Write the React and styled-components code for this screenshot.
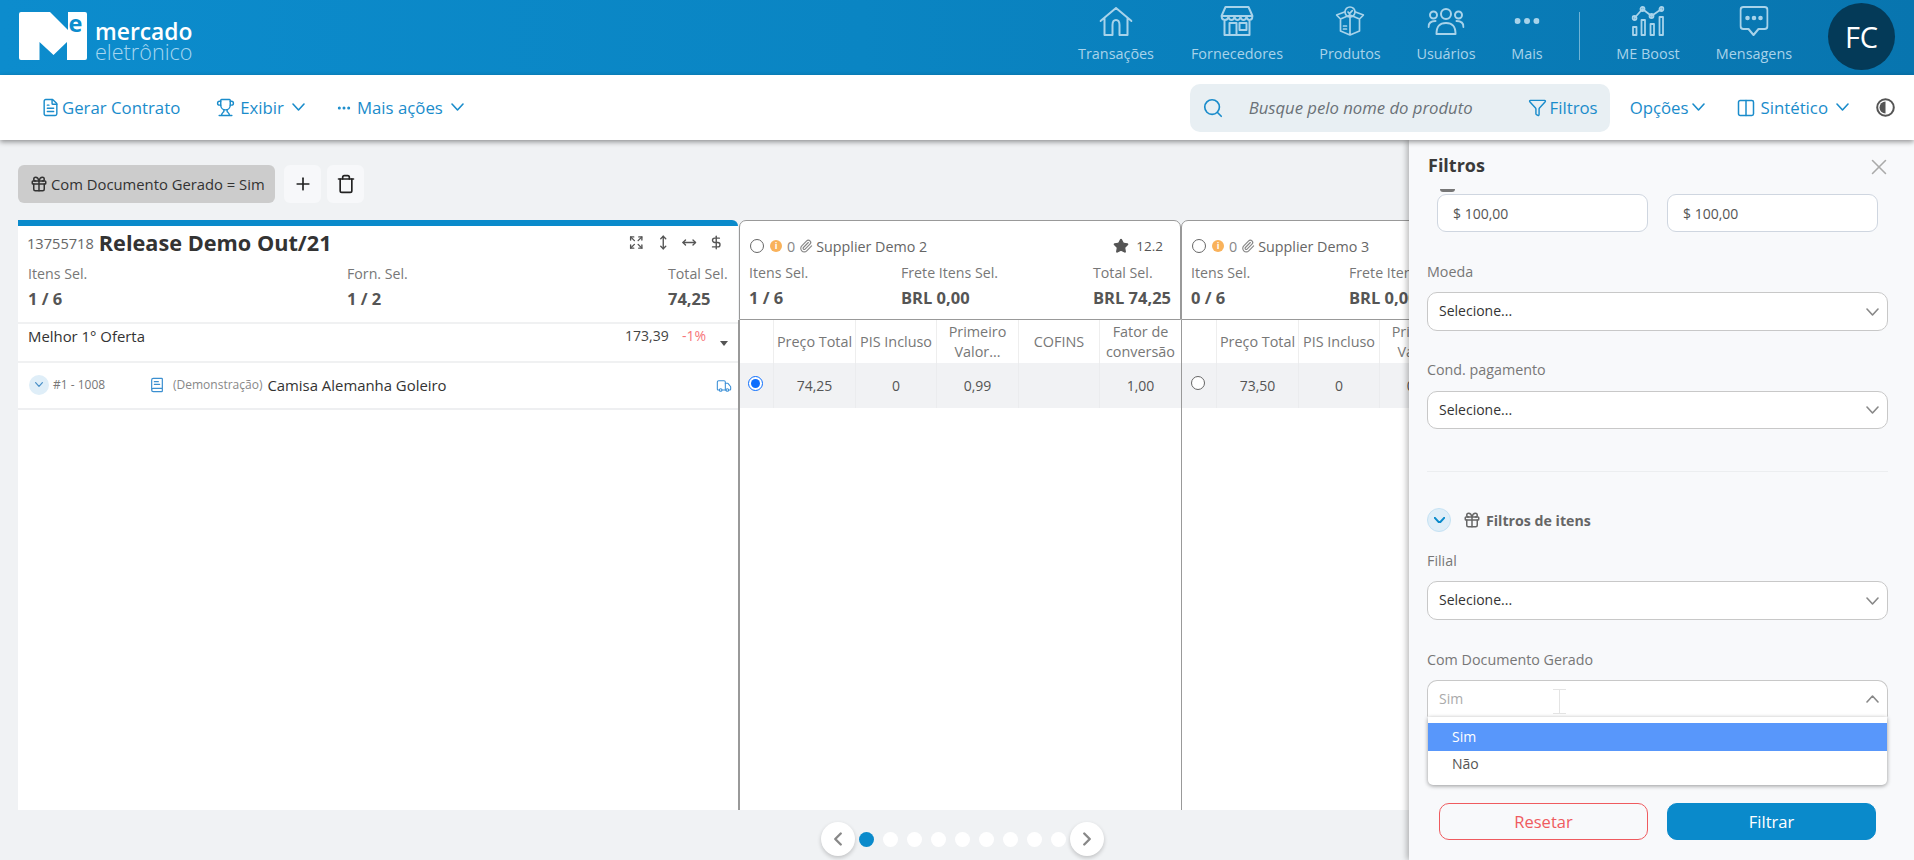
import React from 'react';
import styled, { createGlobalStyle } from 'styled-components';
import {
  FileText, Trophy, Ellipsis, Search, Filter, Columns2, Plus, Trash,
  Star, Paperclip, Gift, BookText, Truck, Expand, MoveVertical, MoveHorizontal, DollarSign, ChevronLeft, ChevronRight, X,
} from 'lucide-react';

const Global = createGlobalStyle`
  html, body { margin: 0; padding: 0; height: 860px; overflow: hidden; background: #f0f2f4; }
  body, button, input { font-family: "Open Sans", "Liberation Sans", sans-serif; }
  * { box-sizing: border-box; }
`;

const Page = styled.div`position: relative; width: 1914px; height: 860px; overflow: hidden; background: #f0f2f4;`;

const Header = styled.header`
  height: 75px; display: flex; align-items: flex-start; padding-right: 19px;
  background: linear-gradient(90deg, #0c8ccd 0%, #0a85c3 45%, #0875af 100%);
`;
const Logo = styled.div`position: relative; margin: 12px 0 0 19px; width: 176px; height: 48px;`;
const LogoE = styled.span`position: absolute; left: 49.500px; top: -7px; font-size: 23.500px; line-height: 36px; font-weight: 700; color: #0c8ccd;`;
const LogoTop = styled.span`position: absolute; left: 76px; top: 10px; font-size: 22.800px; line-height: 20px; font-weight: 600; color: #fff;`;
const LogoBottom = styled.span`position: absolute; left: 76px; top: 30px; font-size: 21.600px; line-height: 20px; font-weight: 300; color: #a6d6f0;`;
const Nav = styled.nav`margin-left: auto; display: flex; align-items: flex-start;`;
const NavItem = styled.div`
  width: ${p => p.$w}px; height: 75px; position: relative; display: flex; flex-direction: column; align-items: center;
  color: #a8d3ea; font-size: 14.400px; line-height: 20px;
  svg { position: absolute; top: ${p => p.$top}px; left: 50%; transform: translateX(-50%); }
  span { position: absolute; top: 44px; white-space: nowrap; }
`;
const NavSep = styled.div`width: 1px; height: 48px; margin: 12px 8px 0 15px; background: #6fb3d6;`;
const Avatar = styled.div`
  width: 67px; height: 67px; margin: 3px 0 0 28px; border-radius: 50%; background: #043a58; color: #fff;
  display: flex; align-items: center; justify-content: center; font-size: 29px;
`;

const Toolbar = styled.div`
  position: relative; z-index: 6; height: 65px; background: #fff; display: flex; align-items: center; padding: 0 19px 0 44px;
  box-shadow: 0 2px 5px rgba(0,0,0,.4); color: #1a8ccb; font-size: 16.800px;
`;
const Action = styled.div`display: flex; align-items: center; gap: ${p => p.$gap || 5}px; margin-left: ${p => p.$ml || 0}px; white-space: nowrap;`;
const SearchBox = styled.div`
  margin-left: auto; width: 420px; height: 48px; border-radius: 10px; background: #e8eff3; display: flex; align-items: center; padding: 0 12px;
`;
const Placeholder = styled.span`margin-left: 25px; font-style: italic; font-size: 16.700px; color: #6b7278; width: 279px; white-space: nowrap;`;
const ChevronSvg = styled.svg`flex: none; margin-left: ${p => p.$ml || 0}px;`;

const ChipRow = styled.div`position: absolute; top: 165px; left: 18px; display: flex; gap: 6px;`;
const Chip = styled.div`
  width: 257px; height: 38px; margin-right: 3px; border-radius: 6px; background: #ccc; color: #333; display: flex; align-items: center; gap: 3px;
  padding-left: 12px; font-size: 14.800px; font-weight: 500; white-space: nowrap;
`;
const IconButton = styled.div`
  width: 37px; height: 38px; border-radius: 6px; background: #f7f8fa; color: #222; display: flex; align-items: center; justify-content: center;
`;

const Board = styled.div`position: absolute; top: 220px; left: 18px; width: 1896px; height: 590px; display: flex; overflow: hidden;`;
const LeftPanel = styled.section`width: 720px; flex: none; background: #fff; border-top: 6px solid #0a8acb; border-top-right-radius: 6px; height: 100%;`;
const TitleRow = styled.div`display: flex; align-items: center; height: 35px; padding: 0 9px 2px 9px; color: #666;`;
const ReqId = styled.span`font-size: 14.600px;`;
const ReqTitle = styled.h1`margin: 0 0 0 5px; font-size: 21.700px; line-height: 30px; font-weight: 700; color: #333; white-space: nowrap;`;
const TitleIcons = styled.div`
  margin-left: auto; display: flex; width: 106px; color: #555;
  svg { width: 26.500px; }
`;
const Stats = styled.div`
  display: grid; grid-template-columns: ${p => p.$cols}; padding-left: ${p => p.$pl}px; margin-top: ${p => p.$mt}px; height: 52px;
`;
const Stat = styled.div`display: flex; flex-direction: column;`;
const StatLabel = styled.span`font-size: 14.200px; line-height: 20px; color: #777; white-space: nowrap;`;
const StatValue = styled.span`margin-top: 4px; font-size: 16.500px; line-height: 22px; font-weight: 700; color: #555; white-space: nowrap;`;
const BestRow = styled.div`
  position: relative; height: 41px; margin-top: 6px; border-top: 2px solid #f0f1f2; border-bottom: 2px solid #f0f1f2; color: #333; font-size: 14.900px; padding: 1px 0 0 10px;
  line-height: 22px; font-weight: 500;
`;
const BestValue = styled.span`position: absolute; left: 607px; top: 1px; font-size: 14px; font-weight: 400; color: #444;`;
const BestPct = styled.span`position: absolute; left: 664px; top: 1px; font-size: 14px; font-weight: 400; color: #f7767a;`;
const Caret = styled.i`position: absolute; left: 702px; top: 17px; border: 4.500px solid transparent; border-top: 5px solid #555; border-bottom: 0;`;
const ItemRow = styled.div`height: 47px; border-bottom: 2px solid #eeeff1; display: flex; align-items: center; padding: 0 0 2px 11px; position: relative;`;
const RoundToggle = styled.div`
  width: ${p => p.$size}px; height: ${p => p.$size}px; border-radius: 50%; background: #dfeef8; color: ${p => p.$c}; border: ${p => p.$b ? '1px solid #c5e2f3' : '0'};
  display: flex; align-items: center; justify-content: center; flex: none;
`;
const ItemCode = styled.span`margin-left: 4px; width: 96px; font-size: 12px; color: #777;`;
const ItemTag = styled.span`margin-left: 8px; font-size: 12px; color: #888;`;
const ItemName = styled.span`margin-left: 5px; font-size: 14.900px; font-weight: 500; color: #333; white-space: nowrap;`;
const TruckWrap = styled.span`position: absolute; left: 698px; top: 15px; color: #3b8fd6; line-height: 0;`;

const Supplier = styled.section`width: ${p => p.$w}px; flex: none; height: 100%; position: relative;`;
const Card = styled.div`height: 100px; background: #fff; border: 1px solid #999; border-radius: 7px 7px 0 0; margin-left: ${p => p.$ml}px;`;
const CardHead = styled.div`display: flex; align-items: center; height: 26px; margin-top: 12px; padding: 0 17px 0 10px; color: #666; font-size: 14.300px; white-space: nowrap;`;
const RadioRing = styled.i`display: block; width: 14px; height: 14px; border-radius: 50%; border: 1px solid #666; background: #fff; flex: none;`;
const InfoDot = styled.b`
  width: 12px; height: 12px; margin-left: 6px; border-radius: 50%; background: #f9b25b; color: #fff; font-size: 9px; line-height: 12px; text-align: center; font-style: normal; flex: none;
`;
const Zero = styled.span`margin: 0 4px 0 5px; color: #888;`;
const SupplierName = styled.span`margin-left: 3px;`;
const Score = styled.span`margin-left: auto; display: flex; align-items: center; gap: 7px; color: #555; font-size: 13.500px;`;
const TableArea = styled.div`position: absolute; top: 100px; bottom: 0; left: 0; right: 0; background: #fff; border-left: ${p => p.$lw}px solid #999;`;
const Grid = styled.div`display: grid; grid-template-columns: ${p => p.$first}px 82px 81px 82px 81px 82px;`;
const Th = styled.div`
  height: 43px; display: flex; align-items: center; justify-content: center; text-align: center; font-size: 14.400px; line-height: 20px; color: #777;
  border-left: ${p => p.$first ? '0' : '1px solid #eee'}; white-space: nowrap;
`;
const Td = styled.div`
  height: 45px; background: #f1f2f4; display: flex; align-items: center; justify-content: center; font-size: 14px; color: #555;
  border-left: ${p => p.$first ? '0' : '1px solid #ebecee'}; position: relative;
`;
const RadioSel = styled.i`
  position: absolute; left: 8px; top: 13px; width: 15px; height: 15px; border-radius: 50%; border: 1.500px solid #0d6efd; background: #fff;
  &::after { content: ""; position: absolute; inset: 2px; border-radius: 50%; background: #0d6efd; }
`;
const RadioAbs = styled(RadioRing)`position: absolute; left: 9px; top: 13px;`;

const Pager = styled.div`position: absolute; top: 822px; left: 821px; display: flex; align-items: center; height: 34px;`;
const PagerBtn = styled.div`
  width: 34px; height: 34px; border-radius: 50%; background: #fff; color: #888; display: flex; align-items: center; justify-content: center;
  box-shadow: 0 2px 4px rgba(0,0,0,.2);
`;
const Dots = styled.div`display: flex; gap: 9px; margin: 0 4px;`;
const Dot = styled.i`display: block; width: 15px; height: 15px; border-radius: 50%; background: ${p => p.$on ? '#0a8acb' : '#fff'};`;

const Panel = styled.aside`
  position: absolute; z-index: 5; top: 140px; left: 1409px; right: 0; bottom: 0; background: #f8f9fb; padding: 15px 0 0 18px;
  box-shadow: -2px 0 6px rgba(0,0,0,.28);
`;
const PanelTitle = styled.h2`margin: 0 0 0 1px; font-size: 18px; line-height: 20px; font-weight: 700; color: #3a3a3a;`;
const CloseBtn = styled.span`position: absolute; left: 457px; top: 14px; color: #aaa; line-height: 0;`;
const InputRow = styled.div`position: relative; display: flex; gap: 19px; margin: 19px 0 0 10px; width: 441px;`;
const Thumb = styled.i`position: absolute; left: 3px; top: -5px; width: 15px; height: 3px; border-radius: 0 0 8px 8px; background: #777;`;
const MoneyInput = styled.div`
  width: 211px; height: 38px; border: 1px solid #cfd6e0; border-radius: 9px; background: #fff; padding-left: 15px; display: flex; align-items: center; font-size: 14px; color: #555;
`;
const Label = styled.div`margin-top: ${p => p.$mt}px; font-size: 14.300px; line-height: 20px; color: #777; white-space: nowrap;`;
const Select = styled.div`
  position: relative; margin-top: ${p => p.$mt}px; height: ${p => p.$h}px; width: 461px; background: #fff; border: 1px solid #c8c8c8;
  border-radius: ${p => p.$open ? '10px 10px 0 0' : '10px'}; ${p => p.$open && 'border-bottom-color: transparent;'}
  display: flex; align-items: center; padding: 0 0 ${p => p.$open ? 0 : 2}px 11px; font-size: 14px; color: ${p => p.$muted ? '#aaa' : '#333'};
  svg { position: absolute; right: 8px; top: 50%; margin-top: -4px; color: #888; }
`;
const Divider = styled.div`height: 1px; margin-top: 42px; width: 461px; background: #eceef0;`;
const SectionRow = styled.div`display: flex; align-items: center; height: 24px; margin-top: 36px; color: #666;`;
const SectionTitle = styled.span`margin-left: 5px; font-size: 14.200px; font-weight: 700; color: #666;`;
const Menu = styled.div`
  position: absolute; z-index: 2; left: 19px; top: 577px; width: 459px; height: 68px; background: #fff; padding-top: 6px; border-radius: 0 0 5px 5px;
  box-shadow: 0 1px 4px rgba(0,0,0,.4); font-size: 14px; color: #555;
`;
const MenuItem = styled.div`height: ${p => p.$h}px; padding: 0 0 2px 24px; display: flex; align-items: center; ${p => p.$on && 'background: #5897fb; color: #fff; font-weight: 500;'}`;
const IBeam = styled.i`
  position: absolute; left: 144px; top: 549px; width: 13px; height: 25px; border-top: 1px solid #e4e4e4; border-bottom: 1px solid #e4e4e4;
  &::after { content: ""; position: absolute; left: 6px; top: 0; bottom: 0; width: 1px; background: #e4e4e4; }
`;
const Btn = styled.button`
  position: absolute; left: ${p => p.$l}px; top: 663px; width: 209px; height: 37px; border-radius: 10px; font-size: 16.500px; cursor: default;
  border: 1px solid ${p => p.$primary ? '#0a8acb' : '#ef5b5f'}; background: ${p => p.$primary ? '#0a8acb' : 'transparent'}; color: ${p => p.$primary ? '#fff' : '#ef5b5f'};
`;

const Chevron = ({ up, size = 13, w = 1.600, ml, color = 'currentColor' }) => (
  <ChevronSvg $ml={ml} width={size} height={size * 0.62} viewBox="0 0 13 8" fill="none" stroke={color} strokeWidth={w} strokeLinecap="round" strokeLinejoin="round">
    <path d={up ? 'M1 7 6.500 1 12 7' : 'M1 1 6.500 7 12 1'} />
  </ChevronSvg>
);

const ContrastIcon = () => (
  <svg width="19" height="19" viewBox="0 0 19 19">
    <circle cx="9.500" cy="9.500" r="8.300" fill="none" stroke="#555" strokeWidth="2" />
    <path d="M9.500 3.500a6 6 0 0 0 0 12Z" fill="#555" />
  </svg>
);

const stroke = { fill: 'none', stroke: '#a8d3ea', strokeWidth: 2, strokeLinejoin: 'round', strokeLinecap: 'round' };

const HouseIcon = () => (
  <svg width="33" height="29" viewBox="0 0 33 29" {...stroke}>
    <path d="M1 14 16.500 1 32 14M5 11v17h8V18c0-3 1.500-5 3.500-5S20 15 20 18v10h8V11" />
  </svg>
);
const StoreIcon = () => (
  <svg width="33" height="30" viewBox="0 0 33 30" {...stroke}>
    <path d="M5 1h23l4 9c0 5-5 5-6 1-1 4-5 4-6 0-1 4-5 4-6 0-1 4-5 4-6 0-1 4-7 4-7-1Z" />
    <path d="M1 10h31M4 15v14h25V15M9 29V17h7v12M19 17h7v7h-7z" />
  </svg>
);
const BoxIcon = () => (
  <svg width="29" height="30" viewBox="0 0 29 30" {...stroke} strokeWidth="1.700">
    <circle cx="14.500" cy="6" r="5" />
    <path d="m12.500 6 1.500 1.600L16.800 4.600M9 6 1 9l4 4 9.500-4 9.500 4 4-4-8-3M5 13v12l9.500 4 9.500-4V13M14.500 9v20M8 20h3M8 23h3" />
  </svg>
);
const UsersIcon = () => (
  <svg width="37" height="27" viewBox="0 0 37 27" {...stroke}>
    <circle cx="18.500" cy="6" r="5" /><circle cx="6" cy="7" r="3.500" /><circle cx="31" cy="7" r="3.500" />
    <path d="M9 26c0-8 3-11 9.500-11S28 18 28 26ZM1 19c0-4 3-6 7-6M36 19c0-4-3-6-7-6" />
  </svg>
);
const DotsIcon = () => (
  <svg width="25" height="6" viewBox="0 0 25 6"><circle cx="3" cy="3" r="3" fill="#a8d3ea" /><circle cx="12.500" cy="3" r="3" fill="#a8d3ea" /><circle cx="22" cy="3" r="3" fill="#a8d3ea" /></svg>
);
const ChartIcon = () => (
  <svg width="33" height="30" viewBox="0 0 33 30" {...stroke} strokeWidth="1.800">
    <path d="M3 12 11 3l9 7 10-7" />
    <circle cx="3" cy="12" r="2" /><circle cx="11" cy="3" r="2" /><circle cx="20" cy="10" r="2" /><circle cx="30" cy="3" r="2" />
    <rect x="1.500" y="21" width="3.500" height="8" /><rect x="10" y="14" width="3.500" height="15" /><rect x="19" y="18" width="3.500" height="11" /><rect x="28" y="11" width="3.500" height="18" />
  </svg>
);
const MessageIcon = () => (
  <svg width="29" height="30" viewBox="0 0 29 30" {...stroke}>
    <path d="M4 1h21a3 3 0 0 1 3 3v16a3 3 0 0 1-3 3h-6l-5 6-5-6H4a3 3 0 0 1-3-3V4a3 3 0 0 1 3-3Z" />
    <circle cx="8" cy="12" r="1.300" fill="#a8d3ea" /><circle cx="14.500" cy="12" r="1.300" fill="#a8d3ea" /><circle cx="21" cy="12" r="1.300" fill="#a8d3ea" />
  </svg>
);

const columns = ['', 'Preço Total', 'PIS Incluso', 'Primeiro\nValor...', 'COFINS', 'Fator de\nconversão'];
const HeadText = styled.span`white-space: pre-line;`;

function SupplierColumn({ name, sel, total, star, selected, row, line, ml, statCols, firstCol }) {
  return (
    <Supplier $w={443}>
      <Card $ml={ml}>
        <CardHead>
          <RadioRing />
          <InfoDot>i</InfoDot>
          <Zero>0</Zero>
          <Paperclip size={14} color="#888" />
          <SupplierName>{name}</SupplierName>
          {star && (
            <Score><Star size={16} fill="#555" color="#555" />{star}</Score>
          )}
        </CardHead>
        <Stats $cols={statCols} $pl={9} $mt={4}>
          <Stat><StatLabel>Itens Sel.</StatLabel><StatValue>{sel}</StatValue></Stat>
          <Stat><StatLabel>Frete Itens Sel.</StatLabel><StatValue>BRL 0,00</StatValue></Stat>
          <Stat><StatLabel>Total Sel.</StatLabel><StatValue>{total}</StatValue></Stat>
        </Stats>
      </Card>
      <TableArea $lw={line}>
        <Grid $first={firstCol}>
          {columns.map((c, i) => <Th key={i} $first={i === 0}><HeadText>{c}</HeadText></Th>)}
          {row.map((v, i) => (
            <Td key={i} $first={i === 0}>
              {i === 0 ? (selected ? <RadioSel /> : <RadioAbs />) : v}
            </Td>
          ))}
        </Grid>
      </TableArea>
    </Supplier>
  );
}

export default function App() {
  return (
    <Page>
      <Global />
      <Header>
        <Logo>
          <svg width="68" height="48" viewBox="0 0 68 48">
            <path fill="#fff" d="M2 0H31L49 18V0H66Q68 0 68 2V46Q68 48 66 48H48V30L34.500 43 20.500 30V48H2Q0 48 0 46V2Q0 0 2 0Z" />
          </svg>
          <LogoE>e</LogoE>
          <LogoTop>mercado</LogoTop>
          <LogoBottom>eletrônico</LogoBottom>
        </Logo>
        <Nav>
          <NavItem $w={120} $top={7}><HouseIcon /><span>Transações</span></NavItem>
          <NavItem $w={122} $top={6}><StoreIcon /><span>Fornecedores</span></NavItem>
          <NavItem $w={104} $top={6}><BoxIcon /><span>Produtos</span></NavItem>
          <NavItem $w={88} $top={8}><UsersIcon /><span>Usuários</span></NavItem>
          <NavItem $w={74} $top={18}><DotsIcon /><span>Mais</span></NavItem>
          <NavSep />
          <NavItem $w={120} $top={6}><ChartIcon /><span>ME Boost</span></NavItem>
          <NavItem $w={92} $top={6}><MessageIcon /><span>Mensagens</span></NavItem>
        </Nav>
        <Avatar>FC</Avatar>
      </Header>

      <Toolbar>
        <Action><FileText size={19} strokeWidth={1.800} style={{ margin: '0 -3px' }} />Gerar Contrato</Action>
        <Action $ml={36}><Trophy size={19} strokeWidth={1.800} />Exibir<Chevron ml={3} /></Action>
        <Action $ml={31}><Ellipsis size={16} strokeWidth={2.500} />Mais ações<Chevron ml={3} /></Action>
        <SearchBox>
          <Search size={22} strokeWidth={1.800} />
          <Placeholder>Busque pelo nome do produto</Placeholder>
          <Action><Filter size={19} strokeWidth={1.800} style={{ marginRight: -2 }} />Filtros</Action>
        </SearchBox>
        <Action $ml={20} $gap={3}>Opções<Chevron /></Action>
        <Action $ml={31}><Columns2 size={20} strokeWidth={1.800} />Sintético<Chevron ml={3} /></Action>
        <Action $ml={27}><ContrastIcon /></Action>
      </Toolbar>

      <ChipRow>
        <Chip><Gift size={18} strokeWidth={2} />Com Documento Gerado = Sim</Chip>
        <IconButton><Plus size={20} strokeWidth={2} /></IconButton>
        <IconButton><Trash size={20} strokeWidth={2} /></IconButton>
      </ChipRow>

      <Board>
        <LeftPanel>
          <TitleRow>
            <ReqId>13755718</ReqId>
            <ReqTitle>Release Demo Out/21</ReqTitle>
            <TitleIcons>
              <Expand size={15} strokeWidth={2.200} />
              <MoveVertical size={15} strokeWidth={2.200} />
              <MoveHorizontal size={15} strokeWidth={2.200} />
              <DollarSign size={15} strokeWidth={2.200} />
            </TitleIcons>
          </TitleRow>
          <Stats $cols="319px 321px auto" $pl={10} $mt={3}>
            <Stat><StatLabel>Itens Sel.</StatLabel><StatValue>1 / 6</StatValue></Stat>
            <Stat><StatLabel>Forn. Sel.</StatLabel><StatValue>1 / 2</StatValue></Stat>
            <Stat><StatLabel>Total Sel.</StatLabel><StatValue>74,25</StatValue></Stat>
          </Stats>
          <BestRow>
            Melhor 1° Oferta
            <BestValue>173,39</BestValue>
            <BestPct>-1%</BestPct>
            <Caret />
          </BestRow>
          <ItemRow>
            <RoundToggle $size={20} $c="#4a90c8"><Chevron size={8} w={2} /></RoundToggle>
            <ItemCode>#1 - 1008</ItemCode>
            <BookText size={16} color="#3b8fd0" strokeWidth={1.800} />
            <ItemTag>(Demonstração)</ItemTag>
            <ItemName>Camisa Alemanha Goleiro</ItemName>
            <TruckWrap><Truck size={16} strokeWidth={1.600} /></TruckWrap>
          </ItemRow>
        </LeftPanel>
        <SupplierColumn name="Supplier Demo 2" sel="1 / 6" total="BRL 74,25" star="12.2" selected line={2} ml={1} firstCol={33}
          statCols="152px 192px auto" row={['', '74,25', '0', '0,99', '', '1,00']} />
        <SupplierColumn name="Supplier Demo 3" sel="0 / 6" total="BRL 73,50" line={1} ml={0} firstCol={34}
          statCols="158px 192px auto" row={['', '73,50', '0', '0,99', '', '1,00']} />
      </Board>

      <Pager>
        <PagerBtn><ChevronLeft size={22} strokeWidth={2.600} /></PagerBtn>
        <Dots>{[0, 1, 2, 3, 4, 5, 6, 7, 8].map(i => <Dot key={i} $on={i === 0} />)}</Dots>
        <PagerBtn><ChevronRight size={22} strokeWidth={2.600} /></PagerBtn>
      </Pager>

      <Panel>
        <PanelTitle>Filtros</PanelTitle>
        <CloseBtn><X size={26} strokeWidth={1.400} /></CloseBtn>
        <InputRow>
          <Thumb />
          <MoneyInput>$ 100,00</MoneyInput>
          <MoneyInput>$ 100,00</MoneyInput>
        </InputRow>
        <Label $mt={30}>Moeda</Label>
        <Select $mt={10} $h={39}>Selecione...<Chevron /></Select>
        <Label $mt={29}>Cond. pagamento</Label>
        <Select $mt={11} $h={38}>Selecione...<Chevron /></Select>
        <Divider />
        <SectionRow>
          <RoundToggle $size={24} $c="#0a8acb" $b><Chevron size={11} w={2.400} /></RoundToggle>
          <Gift size={18} strokeWidth={2} style={{ marginLeft: 12 }} />
          <SectionTitle>Filtros de itens</SectionTitle>
        </SectionRow>
        <Label $mt={19}>Filial</Label>
        <Select $mt={10} $h={39}>Selecione...<Chevron /></Select>
        <Label $mt={30}>Com Documento Gerado</Label>
        <Select $mt={10} $h={37} $open $muted>Sim<Chevron up /></Select>
        <IBeam />
        <Menu>
          <MenuItem $on $h={28}>Sim</MenuItem>
          <MenuItem $h={27}>Não</MenuItem>
        </Menu>
        <Btn $l={30}>Resetar</Btn>
        <Btn $l={258} $primary>Filtrar</Btn>
      </Panel>
    </Page>
  );
}
